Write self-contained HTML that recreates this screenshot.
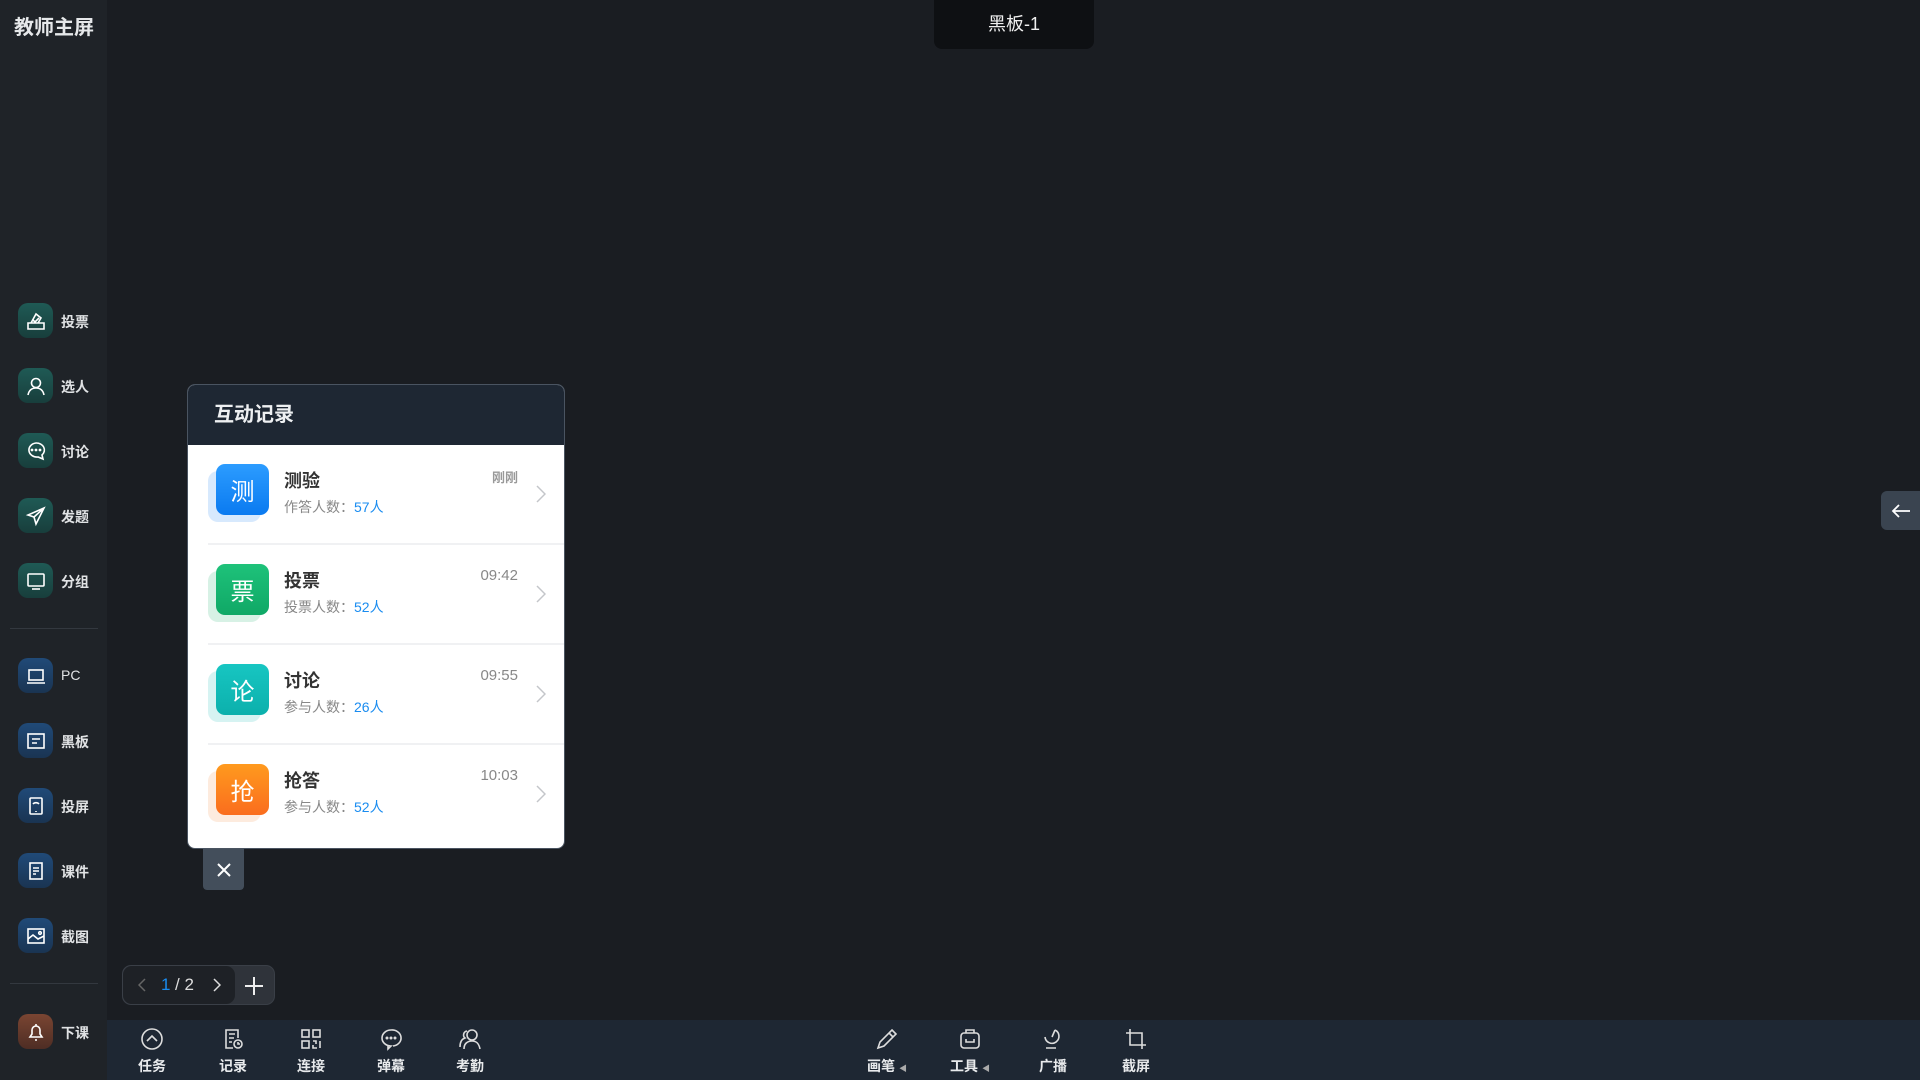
<!DOCTYPE html>
<html><head><meta charset="utf-8"><style>
*{margin:0;padding:0;box-sizing:border-box}
body{width:1920px;height:1080px;background:#1a1d22;font-family:"Liberation Sans","Noto Sans CJK SC",sans-serif;position:relative;overflow:hidden;color:#fff}
.side{position:absolute;left:0;top:0;width:107px;height:1080px;background:#1f2328}
.title{position:absolute;left:14px;top:11px;font-size:20px;font-weight:bold;color:#e6e8ea}
.it{position:absolute;left:18px;width:90px;height:36px}
.ic{position:absolute;left:0;top:0;width:35px;height:35px;border-radius:10px;display:flex;align-items:center;justify-content:center}
.t{background:linear-gradient(#1f5a55,#183e3c)}
.n{background:linear-gradient(#204a78,#1a3452)}
.b{background:linear-gradient(#7a4532,#4e2d24)}
.lb{position:absolute;left:43px;top:9px;font-size:14px;color:#e0e2e4;font-weight:bold}
.div{position:absolute;left:10px;width:88px;height:1px;background:#33383f}
.tab{position:absolute;left:934px;top:0;width:160px;height:49px;background:#0e1013;border-radius:0 0 8px 8px;text-align:center;line-height:49px;font-size:18px;color:#f0f0f0}
.panel{position:absolute;left:187px;top:384px;width:378px;height:465px;border-radius:8px;overflow:hidden;background:#fff;border:1px solid #4a5461}
.ph{height:60px;background:#1e2733;font-size:20px;font-weight:bold;color:#eef0f2;padding-left:26px;line-height:60px}
.row{position:relative;height:100px;border-bottom:2px solid #f0f1f3;margin-left:20px}
.row:last-child{border-bottom:none}
.sq{position:absolute;left:0;top:26px;width:53px;height:51px;border-radius:10px;opacity:.22}
.sq2{position:absolute;left:8px;top:19px;width:53px;height:51px;border-radius:9px;display:flex;align-items:center;justify-content:center;font-size:24px;color:#fff}
.rt{position:absolute;left:76px;top:22px;font-size:18px;color:#333;font-weight:bold}
.rs{position:absolute;left:76px;top:52px;font-size:14px;color:#888}
.rs span{color:#1a8cf0}
.tm{position:absolute;right:46px;top:22px;font-size:15px;color:#888}
.ch{position:absolute;right:18px;top:40px}
.close{position:absolute;left:203px;top:849px;width:41px;height:41px;background:#434e5b;border-radius:0 0 4px 4px;display:flex;align-items:center;justify-content:center}
.pager{position:absolute;left:122px;top:965px;width:153px;height:40px;border-radius:9px;background:#2f333a;border:1px solid #3a3f47}
.pl{position:absolute;left:0;top:0;width:112px;height:38px;background:#1e2126;border-radius:9px}
.bar{position:absolute;left:107px;top:1020px;width:1813px;height:60px;background:#1e2733}
.bi{position:absolute;top:0;width:60px;text-align:center}
.bi svg{position:absolute;left:18px;top:7px}
.bi div{position:absolute;top:36px;width:60px;font-size:14px;color:#e8eaec;font-weight:bold}
.rb{position:absolute;left:1881px;top:491px;width:39px;height:39px;background:#3a4450;border-radius:6px 0 0 6px;display:flex;align-items:center;justify-content:center}
</style></head><body>
<div class="side">
<div class="title">教师主屏</div>
<div class="it" style="top:303px"><div class="ic t"><svg width="22" height="22" viewBox="0 0 22 22" fill="none" stroke="#fff" stroke-width="1.6"><path d="M3 13h16v6H3z M6 13l5-9 5 4-3 5 M8 10l2 2 4-4"/></svg></div><div class="lb">投票</div></div>
<div class="it" style="top:368px"><div class="ic t"><svg width="22" height="22" viewBox="0 0 22 22" fill="none" stroke="#fff" stroke-width="1.6"><circle cx="11" cy="8" r="4.5"/><path d="M3 20c1-5 4-7 8-7s7 2 8 7"/></svg></div><div class="lb">选人</div></div>
<div class="it" style="top:433px"><div class="ic t"><svg width="22" height="22" viewBox="0 0 22 22" fill="none" stroke="#fff" stroke-width="1.6"><path d="M11 3a8 7 0 1 0 2 14l5 2-1-4a8 7 0 0 0-6-12z"/><circle cx="7" cy="10" r=".6" fill="#fff"/><circle cx="11" cy="10" r=".6" fill="#fff"/><circle cx="15" cy="10" r=".6" fill="#fff"/></svg></div><div class="lb">讨论</div></div>
<div class="it" style="top:498px"><div class="ic t"><svg width="22" height="22" viewBox="0 0 22 22" fill="none" stroke="#fff" stroke-width="1.6"><path d="M19 3L3 10l6 2 2 7z M9 12l10-9"/></svg></div><div class="lb">发题</div></div>
<div class="it" style="top:563px"><div class="ic t"><svg width="22" height="22" viewBox="0 0 22 22" fill="none" stroke="#fff" stroke-width="1.6"><rect x="3" y="4" width="16" height="12" rx="1"/><path d="M7 19h8"/></svg></div><div class="lb">分组</div></div>
<div class="div" style="top:628px"></div>
<div class="it" style="top:658px"><div class="ic n"><svg width="22" height="22" viewBox="0 0 22 22" fill="none" stroke="#fff" stroke-width="1.6"><rect x="4" y="5" width="14" height="10"/><path d="M2 18h18"/></svg></div><div class="lb" style="font-weight:normal">PC</div></div>
<div class="it" style="top:723px"><div class="ic n"><svg width="22" height="22" viewBox="0 0 22 22" fill="none" stroke="#fff" stroke-width="1.6"><rect x="3" y="4" width="16" height="14"/><path d="M7 9h8M7 13h5"/></svg></div><div class="lb">黑板</div></div>
<div class="it" style="top:788px"><div class="ic n"><svg width="22" height="22" viewBox="0 0 22 22" fill="none" stroke="#fff" stroke-width="1.6"><rect x="5" y="3" width="12" height="16" rx="1"/><path d="M8 9a4 4 0 0 1 6 0M11 16v1"/></svg></div><div class="lb">投屏</div></div>
<div class="it" style="top:853px"><div class="ic n"><svg width="22" height="22" viewBox="0 0 22 22" fill="none" stroke="#fff" stroke-width="1.6"><rect x="5" y="3" width="12" height="16"/><path d="M8 8h6M8 11h6M8 14h3"/></svg></div><div class="lb">课件</div></div>
<div class="it" style="top:918px"><div class="ic n"><svg width="22" height="22" viewBox="0 0 22 22" fill="none" stroke="#fff" stroke-width="1.6"><rect x="3" y="4" width="16" height="14"/><path d="M3 14l5-4 5 4 6-3"/><circle cx="15" cy="8" r="1.3"/></svg></div><div class="lb">截图</div></div>
<div class="div" style="top:983px"></div>
<div class="it" style="top:1014px"><div class="ic b"><svg width="22" height="22" viewBox="0 0 22 22" fill="none" stroke="#fff" stroke-width="1.6"><path d="M5 16h12l-2-3V9a4 4 0 0 0-8 0v4z M10 19h2 M11 3v2"/></svg></div><div class="lb">下课</div></div>
</div>
<div class="tab">黑板-1</div>

<div class="panel">
<div class="ph">互动记录</div>
<div class="row"><div class="sq" style="background:#4a9bf5"></div><div class="sq2" style="background:linear-gradient(#2c9cff,#0a7af0)">测</div><div class="rt">测验</div><div class="rs">作答人数：<span>57人</span></div><div class="tm" style="font-size:13px;font-weight:bold;color:#999">刚刚</div><svg class="ch" width="10" height="18" viewBox="0 0 10 18"><path d="M1 1l8 8-8 8" fill="none" stroke="#c4c6ca" stroke-width="1.5"/></svg></div>
<div class="row"><div class="sq" style="background:#4ac08a"></div><div class="sq2" style="background:linear-gradient(#1ec27a,#10a866)">票</div><div class="rt">投票</div><div class="rs">投票人数：<span>52人</span></div><div class="tm">09:42</div><svg class="ch" width="10" height="18" viewBox="0 0 10 18"><path d="M1 1l8 8-8 8" fill="none" stroke="#c4c6ca" stroke-width="1.5"/></svg></div>
<div class="row"><div class="sq" style="background:#46c9c4"></div><div class="sq2" style="background:linear-gradient(#17c6c2,#0cb0ac)">论</div><div class="rt">讨论</div><div class="rs">参与人数：<span>26人</span></div><div class="tm">09:55</div><svg class="ch" width="10" height="18" viewBox="0 0 10 18"><path d="M1 1l8 8-8 8" fill="none" stroke="#c4c6ca" stroke-width="1.5"/></svg></div>
<div class="row"><div class="sq" style="background:#f5a26a"></div><div class="sq2" style="background:linear-gradient(#ff9a1e,#fa6d1e)">抢</div><div class="rt">抢答</div><div class="rs">参与人数：<span>52人</span></div><div class="tm">10:03</div><svg class="ch" width="10" height="18" viewBox="0 0 10 18"><path d="M1 1l8 8-8 8" fill="none" stroke="#c4c6ca" stroke-width="1.5"/></svg></div>
</div>
<div class="close"><svg width="16" height="16" viewBox="0 0 16 16"><path d="M2 2l12 12M14 2L2 14" stroke="#fff" stroke-width="2"/></svg></div>

<div class="pager"><div class="pl"></div>
<svg style="position:absolute;left:15px;top:12px" width="8" height="14" viewBox="0 0 8 14"><path d="M7 1L1 7l6 6" fill="none" stroke="#666" stroke-width="1.5"/></svg>
<div style="position:absolute;left:38px;top:9px;font-size:17px;color:#1a8cf0">1</div>
<div style="position:absolute;left:52px;top:9px;font-size:17px;color:#ddd">/ 2</div>
<svg style="position:absolute;left:90px;top:12px" width="8" height="14" viewBox="0 0 8 14"><path d="M1 1l6 6-6 6" fill="none" stroke="#ddd" stroke-width="1.5"/></svg>
<svg style="position:absolute;left:122px;top:11px" width="18" height="18" viewBox="0 0 18 18"><path d="M9 0v18M0 9h18" stroke="#eee" stroke-width="2"/></svg>
</div>

<div class="bar">
<div class="bi" style="left:15px"><svg width="24" height="24" viewBox="0 0 24 24" fill="none" stroke="#ddd" stroke-width="1.6"><circle cx="12" cy="12" r="10"/><path d="M7 14l5-5 5 5"/></svg><div>任务</div></div>
<div class="bi" style="left:96px"><svg width="24" height="24" viewBox="0 0 24 24" fill="none" stroke="#ddd" stroke-width="1.6"><path d="M12 21H5V3h12v8 M8 7h6M8 11h5M8 15h3"/><circle cx="17" cy="17" r="4"/><path d="M17 15v2h2"/></svg><div>记录</div></div>
<div class="bi" style="left:174px"><svg width="24" height="24" viewBox="0 0 24 24" fill="none" stroke="#ddd" stroke-width="1.6"><rect x="3" y="3" width="7" height="7"/><rect x="14" y="3" width="7" height="7"/><rect x="3" y="14" width="7" height="7"/><path d="M14 14h3v3M21 14v7M14 18v3h4"/></svg><div>连接</div></div>
<div class="bi" style="left:254px"><svg width="24" height="24" viewBox="0 0 24 24" fill="none" stroke="#ddd" stroke-width="1.6"><path d="M12 3a9 8 0 1 0 0 16l-3 3v-4"/><path d="M12 3a9 8 0 0 1 2 16"/><circle cx="8" cy="11" r=".7" fill="#ddd"/><circle cx="12" cy="11" r=".7" fill="#ddd"/><circle cx="16" cy="11" r=".7" fill="#ddd"/></svg><div>弹幕</div></div>
<div class="bi" style="left:333px"><svg width="24" height="24" viewBox="0 0 24 24" fill="none" stroke="#ddd" stroke-width="1.6"><circle cx="14" cy="8" r="5"/><path d="M6 22c0-5 3-8 8-8s7 3 8 8 M9 4a4 4 0 0 0-2 7c-3 1-5 4-5 9"/></svg><div>考勤</div></div>
<div class="bi" style="left:750px"><svg width="24" height="24" viewBox="0 0 24 24" fill="none" stroke="#ddd" stroke-width="1.6"><path d="M17 3l4 4L9 19l-6 2 2-6z M14 6l4 4"/></svg><div>画笔 <span style="font-size:8px;color:#aaa">◀</span></div></div>
<div class="bi" style="left:833px"><svg width="24" height="24" viewBox="0 0 24 24" fill="none" stroke="#ddd" stroke-width="1.6"><rect x="3" y="6" width="18" height="15" rx="3"/><path d="M8 6V3h8v3 M8 12v3h8v-3"/></svg><div>工具 <span style="font-size:8px;color:#aaa">◀</span></div></div>
<div class="bi" style="left:916px"><svg width="24" height="24" viewBox="0 0 24 24" fill="none" stroke="#ddd" stroke-width="1.6"><path d="M14 3a7 7 0 1 1-10 7 M14 3l-3 7 M5 21h10"/></svg><div>广播</div></div>
<div class="bi" style="left:999px"><svg width="24" height="24" viewBox="0 0 24 24" fill="none" stroke="#ddd" stroke-width="1.6"><path d="M6 2v16h16 M2 6h16v16"/></svg><div>截屏</div></div>
</div>
<div class="rb"><svg width="20" height="16" viewBox="0 0 20 16"><path d="M19 8H2M8 2L2 8l6 6" fill="none" stroke="#fff" stroke-width="1.8"/></svg></div>
</body></html>
